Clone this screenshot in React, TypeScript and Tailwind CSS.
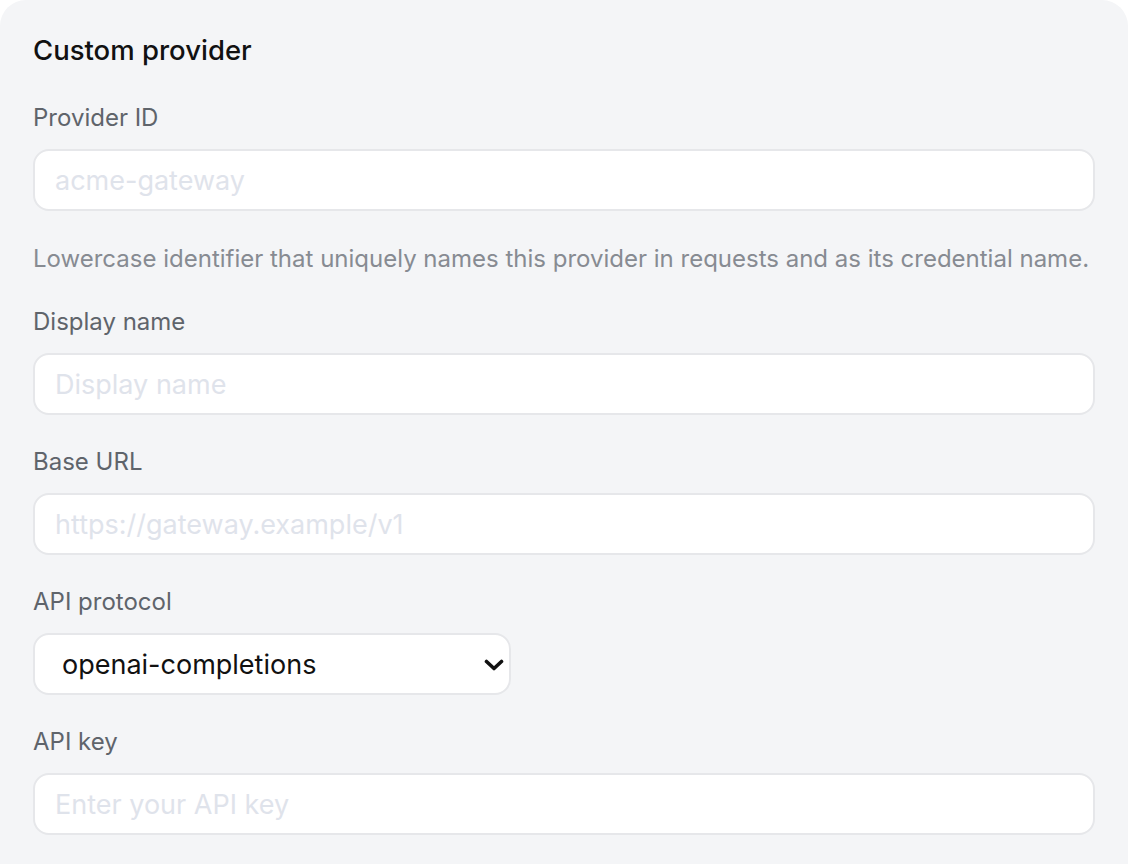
import { ChangeEvent, useState } from "react";

function Field({
  label,
  placeholder,
  hint,
  type = "text",
}: {
  label: string;
  placeholder: string;
  hint?: string;
  type?: string;
}) {
  return (
    <div className="flex flex-col">
      <label className="mb-[17px] text-[24px] leading-[28px] text-[#5f646b]">{label}</label>
      <input
        type={type}
        placeholder={placeholder}
        className="h-[62px] w-full rounded-[16px] border-2 border-[#e6e7ea] bg-white px-[20px] text-[27px] text-[#111] outline-none placeholder:text-[#dfe3eb]"
      />
      {hint && (
        <p className="mt-[34px] mb-[2px] text-[24px] leading-[28px] text-[#878b92]">{hint}</p>
      )}
    </div>
  );
}

export default function App() {
  const [protocol, setProtocol] = useState("openai-completions");

  return (
    <div className="min-h-screen bg-white font-['Inter',sans-serif]">
      <div className="min-h-[900px] rounded-[26px] bg-[#f4f5f7] px-[33px] pt-[32px]">
        <h2 className="text-[27.5px] font-medium leading-[36px] text-[#111]">Custom provider</h2>
        <div className="mt-[36px] flex w-[1062px] flex-col gap-[33px]">
          <Field
            label="Provider ID"
            placeholder="acme-gateway"
            hint="Lowercase identifier that uniquely names this provider in requests and as its credential name."
          />
          <Field label="Display name" placeholder="Display name" />
          <Field label="Base URL" placeholder="https://gateway.example/v1" />
          <div className="flex flex-col">
            <label className="mb-[17px] text-[24px] leading-[28px] text-[#5f646b]">API protocol</label>
            <div className="relative w-[478px]">
              <select
                value={protocol}
                onChange={(e: ChangeEvent<HTMLSelectElement>) => setProtocol(e.target.value)}
                className="h-[62px] w-full appearance-none rounded-[16px] border-2 border-[#e6e7ea] bg-white pt-[3px] pl-[27px] text-[27px] text-[#111] outline-none"
              >
                <option value="openai-completions">openai-completions</option>
                <option value="openai-responses">openai-responses</option>
                <option value="anthropic-messages">anthropic-messages</option>
              </select>
              <svg
                className="pointer-events-none absolute right-[7px] top-[26px] h-[12px] w-[20px]"
                viewBox="0 0 20 12"
                fill="none"
                stroke="#111"
                strokeWidth="3.6"
                strokeLinecap="round"
                strokeLinejoin="round"
              >
                <path d="M2.5 2.5 L10 9.5 L17.5 2.5" />
              </svg>
            </div>
          </div>
          <Field label="API key" placeholder="Enter your API key" type="password" />
        </div>
      </div>
    </div>
  );
}
